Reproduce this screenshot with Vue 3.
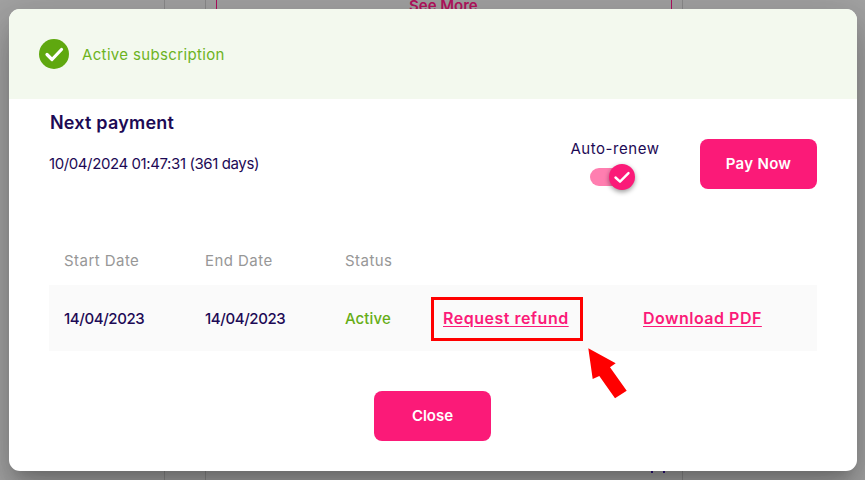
<script setup>
const rows = [
  { start: '14/04/2023', end: '14/04/2023', status: 'Active' },
]
</script>

<template>
  <div class="page">
    <!-- dimmed page behind the modal -->
    <div class="behind">
      <span class="line l1"></span>
      <span class="line l2"></span>
      <span class="line l3 pink"></span>
      <span class="line l4 pink"></span>
      <span class="line l5"></span>
      <span class="seeMore">See More</span>
      <span class="dot d1"></span>
      <span class="dot d2"></span>
    </div>

    <div class="modal">
      <div class="banner">
        <svg class="bannerIcon" width="30" height="30" viewBox="0 0 30 30">
          <circle cx="15" cy="15" r="15" fill="#5fa80f" />
          <path d="M8 15.5l5 5 9.5-10" fill="none" stroke="#fff" stroke-width="3.2" stroke-linecap="round" stroke-linejoin="round" />
        </svg>
        <span class="bannerText">Active subscription</span>
      </div>

      <div class="payment">
        <div class="paymentInfo">
          <h3>Next payment</h3>
          <p>10/04/2024 01:47:31 (361 days)</p>
        </div>
        <div class="autoRenew">
          <span class="autoLabel">Auto-renew</span>
          <div class="toggle">
            <div class="knob">
              <svg width="26" height="26" viewBox="0 0 26 26">
                <path d="M6.5 13.5l4.5 4.2 8.5-8.6" fill="none" stroke="#fff" stroke-width="2.4" stroke-linecap="round" stroke-linejoin="round" />
              </svg>
            </div>
          </div>
        </div>
        <button class="btn payBtn">Pay Now</button>
      </div>

      <div class="table">
        <div class="grid head">
          <span>Start Date</span>
          <span>End Date</span>
          <span>Status</span>
        </div>
        <div v-for="r in rows" :key="r.start" class="grid row">
          <span class="date">{{ r.start }}</span>
          <span class="date">{{ r.end }}</span>
          <span class="active">{{ r.status }}</span>
          <a href="#" class="link refund">Request refund</a>
          <a href="#" class="link pdf">Download PDF</a>
        </div>
      </div>

      <div class="footer">
        <button class="btn closeBtn">Close</button>
      </div>

      <!-- red annotation over the screenshot -->
      <div class="redBox"></div>
      <svg class="arrow" width="50" height="60" viewBox="0 0 50 60">
        <polygon points="8.3,8.3 35.7,23.3 30,27.3 46.7,50.7 35,58.3 19.3,36 12.7,39" fill="#ff0000" />
      </svg>
    </div>
  </div>
</template>

<style>
html, body {
  margin: 0;
  background: #a3a3a3;
}
</style>

<style scoped>
.page {
  position: relative;
  width: 865px;
  height: 480px;
  overflow: hidden;
  padding: 9px 8px 9px 9px;
  box-sizing: border-box;
  background: #a3a3a3;
  font-family: Inter, "Open Sans", sans-serif;
}
.behind {
  position: absolute;
  inset: 0;
}
.line {
  position: absolute;
  top: 0;
  bottom: 0;
  width: 1px;
  background: #8b8b8b;
}
.l1 { left: 164px; }
.l2 { left: 205px; }
.l3 { left: 216px; height: 9px; bottom: auto; }
.l4 { left: 671px; height: 9px; bottom: auto; }
.l5 { left: 682px; }
.pink { background: #b0105f; }
.seeMore {
  position: absolute;
  left: 409px;
  top: -3px;
  font-size: 15px;
  font-weight: 600;
  line-height: 17px;
  color: #b5135f;
}
.dot {
  position: absolute;
  top: 471px;
  width: 2px;
  height: 2px;
  z-index: 1;
  background: #1d0a55;
}
.d1 { left: 651px; }
.d2 { left: 663px; }
.modal {
  position: relative;
  width: 848px;
  height: 462px;
  background: #fff;
  border-radius: 11px;
  overflow: hidden;
  box-shadow: 0 11px 15px -7px rgba(0, 0, 0, 0.2), 0 24px 38px 3px rgba(0, 0, 0, 0.14), 0 9px 46px 8px rgba(0, 0, 0, 0.12);
  display: flex;
  flex-direction: column;
}
.banner {
  height: 90px;
  flex: none;
  display: flex;
  align-items: center;
  gap: 13px;
  padding-left: 30px;
  background: #f3f9ee;
}
.bannerIcon {
  flex: none;
}
.bannerText {
  font-size: 15px;
  color: #6db31e;
  letter-spacing: 0.35px;
}
.payment {
  height: 90px;
  flex: none;
  display: flex;
  padding: 0 40px 0 40px;
  position: relative;
}
.paymentInfo {
  width: 511px;
  color: #1d0a55;
}
.paymentInfo h3 {
  margin: 13px 0 0 1px;
  font-size: 18px;
  line-height: 22px;
  font-weight: 600;
  letter-spacing: 0.2px;
}
.paymentInfo p {
  margin: 20px 0 0;
  font-size: 15px;
  line-height: 20px;
  letter-spacing: -0.4px;
}
.autoRenew {
  width: 125px;
  padding-top: 40px;
  display: flex;
  flex-direction: column;
  align-items: center;
  margin-right: 15px;
  padding-right: 15px;
  box-sizing: border-box;
  color: #1d0a55;
}
.autoLabel {
  font-size: 15px;
  line-height: 20px;
  letter-spacing: 0.55px;
}
.toggle {
  position: relative;
  width: 34px;
  height: 18px;
  margin-top: 9px;
  margin-right: 16px;
  background: #ff7eb0;
  border-radius: 9px;
}
.knob {
  position: absolute;
  right: -11px;
  top: -4px;
  width: 26px;
  height: 26px;
  border-radius: 50%;
  background: #fb1a78;
  box-shadow: 0 2px 5px rgba(0, 0, 0, 0.4);
}
.knob svg {
  display: block;
}
.btn {
  width: 117px;
  height: 50px;
  border: none;
  border-radius: 8px;
  background: #fb1a78;
  color: #fff;
  font-family: inherit;
  font-size: 15px;
  font-weight: 600;
  padding: 0;
}
.payBtn {
  margin-top: 40px;
  padding-bottom: 2px;
  letter-spacing: 0.3px;
}
.table {
  margin-top: 58px;
  padding: 0 40px;
}
.grid {
  display: grid;
  grid-template-columns: 141px 140px 98px 200px 1fr;
  padding-left: 15px;
  align-items: center;
}
.head {
  height: 38px;
  padding-bottom: 12px;
  box-sizing: border-box;
  font-size: 15px;
  color: #979797;
  letter-spacing: 0.45px;
}
.row {
  height: 66px;
  background: #fafafa;
  font-size: 15px;
}
.date {
  color: #1d0a55;
  font-weight: 500;
  letter-spacing: -0.4px;
}
.active {
  color: #66ad16;
  font-weight: 500;
  letter-spacing: 0.1px;
}
.link {
  color: #fb1a78;
  font-size: 16px;
  font-weight: 600;
  letter-spacing: 0.5px;
  text-underline-offset: 2px;
}
.footer {
  margin-top: 40px;
  padding-left: 365px;
}
.closeBtn {
  display: block;
  padding-bottom: 2px;
}
.redBox {
  position: absolute;
  left: 422px;
  top: 288px;
  width: 152px;
  height: 44px;
  border: 3px solid #ff0000;
  box-sizing: border-box;
}
.arrow {
  position: absolute;
  left: 571px;
  top: 331px;
}
</style>
